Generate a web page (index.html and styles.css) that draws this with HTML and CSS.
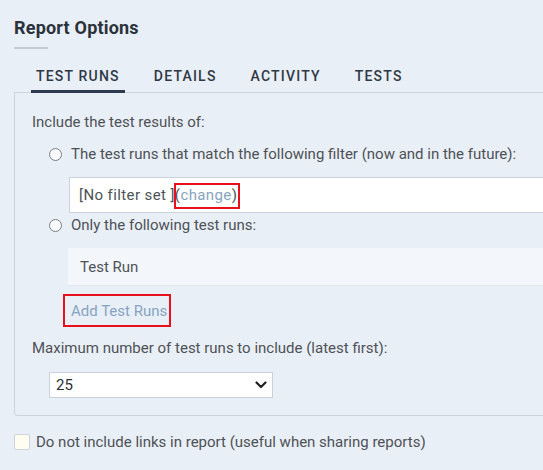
FILE: index.html
```html
<!DOCTYPE html>
<html lang="en">
<head>
<meta charset="utf-8">
<title>Report Options</title>
<link rel="stylesheet" href="styles.css">
</head>
<body>
  <h2 class="title">Report Options</h2>

  <nav class="tabs">
    <span class="tab active">TEST RUNS</span>
    <span class="tab">DETAILS</span>
    <span class="tab">ACTIVITY</span>
    <span class="tab">TESTS</span>
  </nav>

  <section class="panel">
    <p class="label">Include the test results of:</p>

    <div class="radio-row">
      <span class="radio"></span>
      <span>The test runs that match the following filter (now and in the future):</span>
    </div>
    <div class="filter-box">
      [No filter set ]<span class="marked paren">(<a class="link">change</a>)</span>
    </div>

    <div class="radio-row tight">
      <span class="radio"></span>
      <span>Only the following test runs:</span>
    </div>
    <div class="run-box">Test Run</div>

    <div class="add-row">
      <a class="link marked">Add Test Runs</a>
    </div>

    <p class="label max-label">Maximum number of test runs to include (latest first):</p>
    <div class="select">
      <span>25</span>
      <svg class="chevron" width="12" height="8" viewBox="0 0 12 8" aria-hidden="true">
        <path d="M1.5 1.5 L6 6 L10.5 1.5" fill="none" stroke="#222" stroke-width="2.2" stroke-linecap="round" stroke-linejoin="round"/>
      </svg>
    </div>
  </section>

  <label class="check-row">
    <span class="checkbox"></span>
    <span>Do not include links in report (useful when sharing reports)</span>
  </label>
</body>
</html>
```

FILE: styles.css
```css
html, body {
  margin: 0;
  padding: 0;
}

body {
  background: #e9eff6;
  font-family: Roboto, "Liberation Sans", sans-serif;
  font-size: 15px;
  color: #4e5257;
  padding: 0 14px;
  overflow: hidden;
  height: 470px;
  box-sizing: border-box;
}

.title {
  margin: 0;
  padding-top: 17px;
  font-size: 18px;
  line-height: 22px;
  font-weight: 700;
  letter-spacing: 0.2px;
  color: #2b323b;
  padding-bottom: 12px;
}

.title::after {
  content: "";
  display: block;
  width: 34px;
  height: 2px;
  background: #c3cbd4;
  margin-top: 8px;
}

.tabs {
  display: flex;
  gap: 24px;
  padding-left: 17px;
  margin-top: 5px;
}

.tab {
  padding: 0 5px 4px;
  font-size: 14px;
  font-weight: 500;
  letter-spacing: 1.2px;
  line-height: 20px;
  color: #2f3945;
  border-bottom: 3px solid transparent;
}

.tab.active {
  border-bottom-color: #2e3a4d;
}

.panel {
  border: 1px solid #ccd4dd;
  border-right: none;
  border-radius: 0 0 0 4px;
  margin-top: -1px;
  margin-right: -60px;
  padding: 19px 0 17px 17px;
}

.label {
  margin: 0;
  line-height: 20px;
}

.radio-row {
  display: flex;
  align-items: center;
  gap: 9px;
  margin-top: 12px;
  padding-left: 17px;
  line-height: 20px;
}

.radio-row.tight {
  margin-top: 2px;
}

.radio {
  width: 11px;
  height: 11px;
  border: 1px solid #7b7f84;
  border-radius: 50%;
  background: #f7f9fb;
  flex: none;
}

.filter-box {
  margin: 13px 0 0 37px;
  height: 34px;
  line-height: 34px;
  background: #fff;
  border: 1px solid #cbd3dc;
  border-right: none;
  padding-left: 9px;
  letter-spacing: 0.4px;
}

.paren {
  color: #4e5257;
}

.link {
  color: #86a3c3;
  text-decoration: none;
}

.marked {
  position: relative;
}

.marked::after {
  content: "";
  position: absolute;
  border: 2px solid #e8101a;
  pointer-events: none;
}

.filter-box .marked::after {
  left: -1px;
  right: -3px;
  top: -3px;
  bottom: -5px;
}

.run-box {
  margin: 13px 0 0 36px;
  height: 38px;
  line-height: 38px;
  background: #f3f6fa;
  border-bottom: 1px solid #e1e6ec;
  padding-left: 12px;
  box-sizing: border-box;
}

.add-row {
  margin-top: 15px;
  padding-left: 39px;
  line-height: 20px;
}

.add-row .marked::after {
  left: -8px;
  right: -4px;
  top: -8px;
  bottom: -7px;
}

.max-label {
  margin-top: 17px;
}

.select {
  margin: 14px 0 0 17px;
  width: 224px;
  height: 26px;
  box-sizing: border-box;
  background: #fff;
  border: 1px solid #c9d2dc;
  display: flex;
  align-items: center;
  justify-content: space-between;
  padding: 0 5px 0 6px;
  color: #2b2f34;
}

.chevron {
  display: block;
}

.check-row {
  display: flex;
  align-items: center;
  gap: 6px;
  margin-top: 16px;
  line-height: 20px;
}

.checkbox {
  width: 14px;
  height: 14px;
  border: 1px solid #cdd3d9;
  border-radius: 2px;
  background: #fffef0;
  flex: none;
}
```
